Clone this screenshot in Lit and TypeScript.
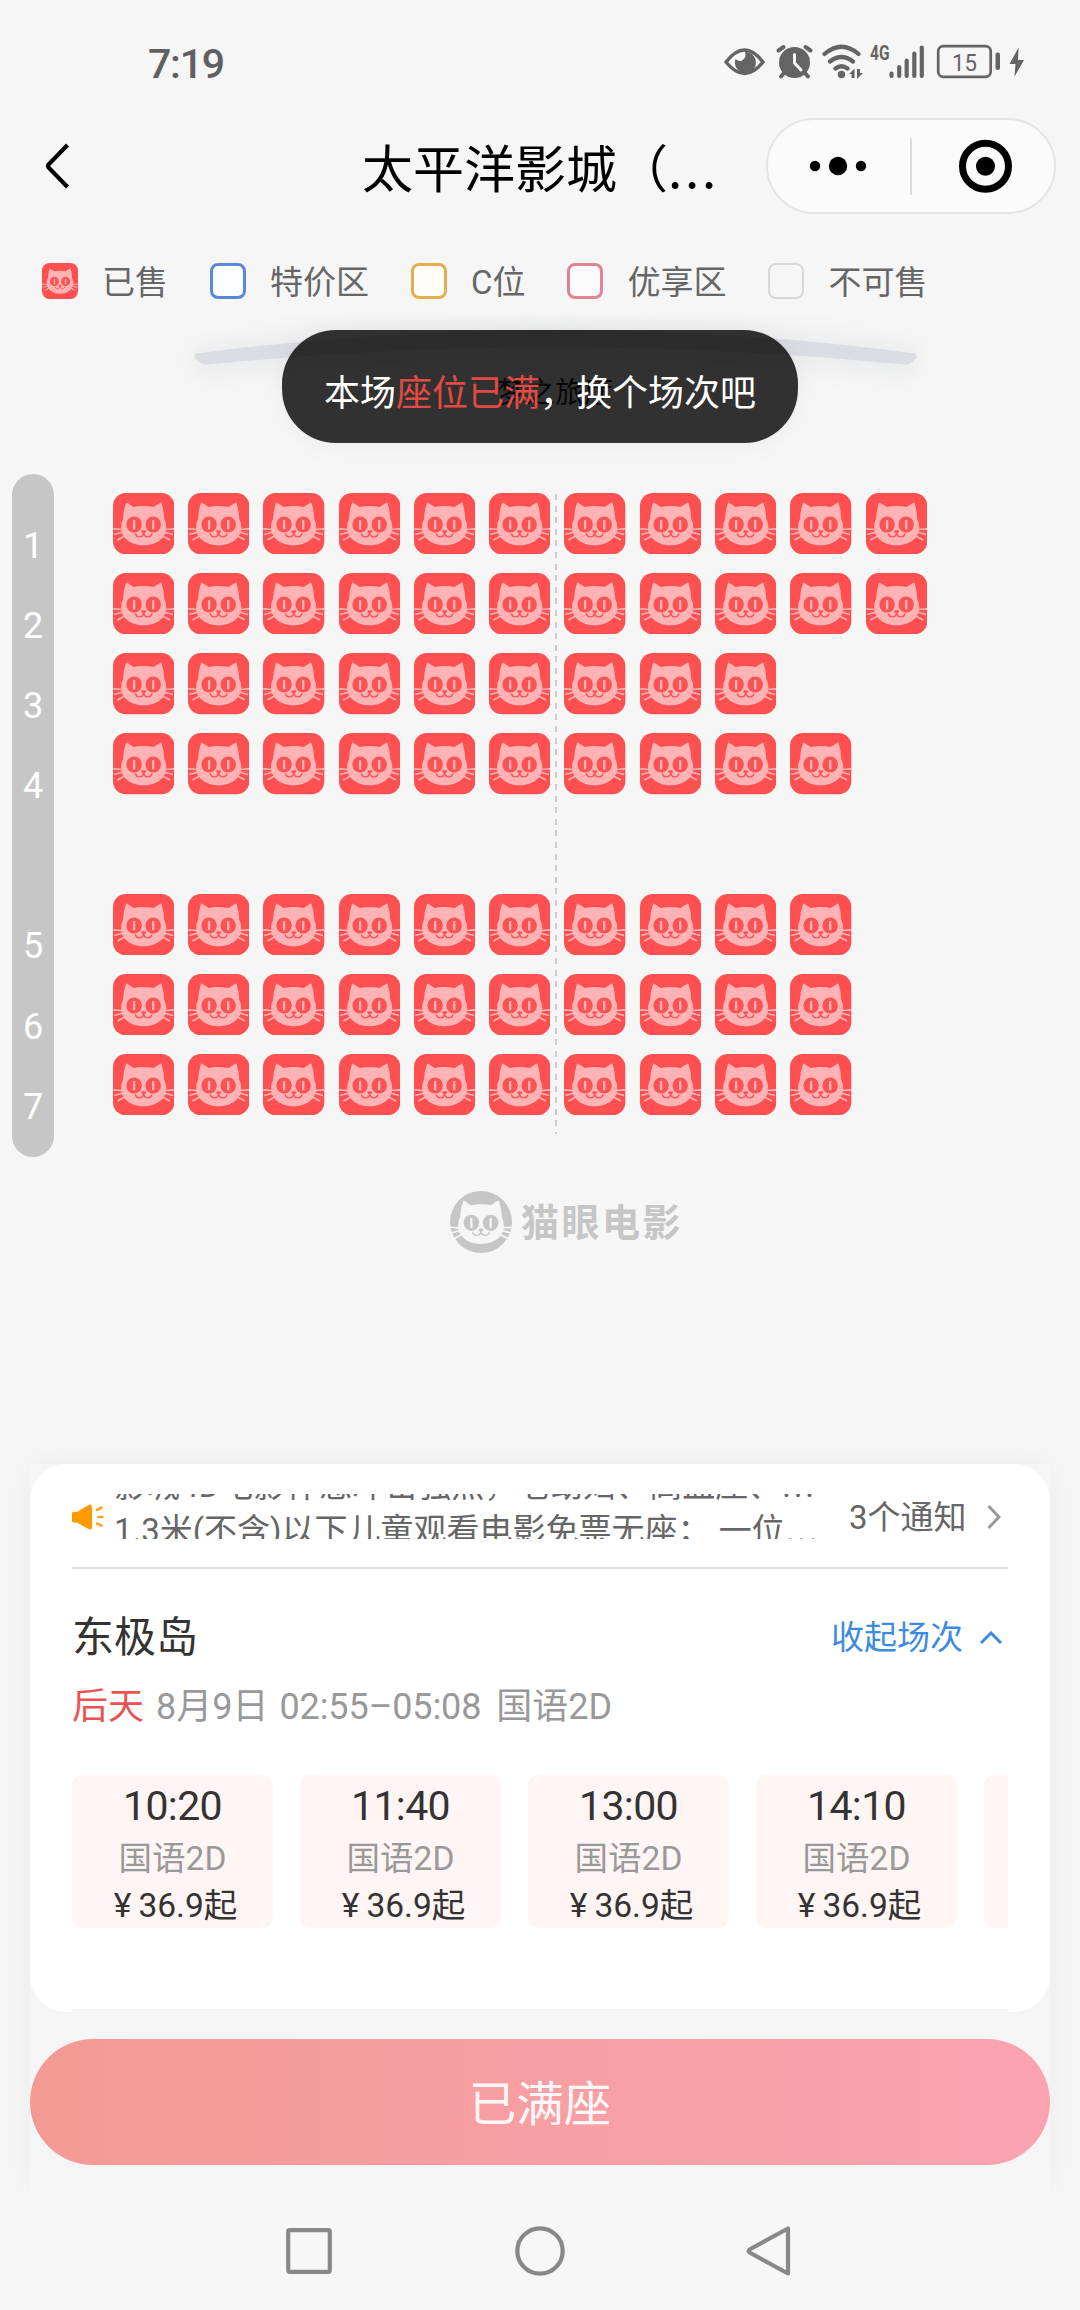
import { LitElement, html, css, svg } from "lit";
import { customElement, property } from "lit/decorators.js";

const catFace = (face: string, ink: string) => svg`
  <path fill=${face} d="M39 29 Q40 28 42 29 L62 42 Q91 36 121 42 L141 29 Q144 28 145 30 Q152 52 153 77 Q159 88 159 103 C159 134 130 156 91.500 156 C53 156 24 134 24 103 Q24 88 30 77 Q31 52 39 29 Z" />
  <ellipse fill=${ink} cx="63" cy="94" rx="23" ry="24" />
  <ellipse fill=${ink} cx="120" cy="94" rx="23" ry="24" />
  <rect fill=${face} x="59.500" y="80" width="7" height="29" rx="3.500" />
  <rect fill=${face} x="116.500" y="80" width="7" height="29" rx="3.500" />
  <path fill=${ink} d="M84 115 Q84 111 91.500 111 Q99 111 99 115 Q99 118 91.500 122 Q84 118 84 115 Z" />
  <path fill="none" stroke=${ink} stroke-width="4" stroke-linecap="round" d="M91.500 120 Q90 131 79 131 Q69 131 67 122 M91.500 120 Q93 131 104 131 Q114 131 116 122" />
`;

const whiskers = (color: string) => svg`
  <path fill="none" stroke=${color} stroke-width="5" d="M1 107 L26 109 M4 124 L28 117 M13 140 L34 129 M182 107 L157 109 M179 124 L155 117 M170 140 L149 129" />
`;

@customElement("cat-seat")
export class CatSeat extends LitElement {
  static styles = css`
    :host {
      display: block;
    }
    .icon {
      display: block;
      width: 100%;
      height: 100%;
    }
  `;

  render() {
    return html`<svg class="icon" viewBox="0 0 183 183">
      <rect width="183" height="183" rx="38" fill="#ff5051" />
      ${catFace("#ffb3b5", "#fb5354")} ${whiskers("#ffb3b5")}
    </svg>`;
  }
}

@customElement("session-card")
export class SessionCard extends LitElement {
  @property() time = "";
  @property() kind = "";
  @property() price = "";

  static styles = css`
    :host {
      display: flex;
      flex-direction: column;
      align-items: center;
      flex: none;
      width: 201px;
      height: 153px;
      border-radius: 10px;
      background: #fff5f4;
      color: #333;
      white-space: nowrap;
    }
    .time {
      margin-top: 6px;
      font-size: 41px;
      line-height: 50px;
      letter-spacing: -0.6px;
    }
    .kind {
      margin-top: 8px;
      font-size: 33.500px;
      line-height: 40px;
      color: #999;
    }
    .price {
      margin-top: 6px;
      font-size: 33.500px;
      line-height: 42px;
    }
    .yen {
      margin: 0 7px 0 6px;
    }
  `;

  render() {
    if (!this.time) return html``;
    return html`
      <div class="time">${this.time}</div>
      <div class="kind">${this.kind}</div>
      <div class="price"><span class="yen">¥</span>${this.price}起</div>
    `;
  }
}

const ROWS = [
  { label: "1", seats: 11 },
  { label: "2", seats: 11 },
  { label: "3", seats: 9 },
  { label: "4", seats: 10 },
  { label: "", seats: 0 },
  { label: "5", seats: 10 },
  { label: "6", seats: 10 },
  { label: "7", seats: 10 },
];

const SESSIONS = ["10:20", "11:40", "13:00", "14:10", ""];

@customElement("app-root")
export class AppRoot extends LitElement {
  static styles = css`
    :host {
      display: block;
      font-family: Roboto, "Noto Sans CJK SC", sans-serif;
    }
    .page {
      position: relative;
      display: flex;
      flex-direction: column;
      width: 1080px;
      height: 2310px;
      overflow: hidden;
      background: #f6f6f6;
    }
    svg {
      display: block;
      flex: none;
    }

    .status {
      display: flex;
      justify-content: space-between;
      box-sizing: border-box;
      height: 118px;
      padding: 40px 54px 0 148px;
      color: #606060;
    }
    .clock {
      font-size: 41px;
      line-height: 48px;
      font-weight: 500;
      letter-spacing: -1.200px;
    }

    .header {
      display: flex;
      align-items: center;
      box-sizing: border-box;
      height: 96px;
      padding: 0 24px 0 45px;
    }
    .title {
      width: 358px;
      margin-left: 291px;
      font-family: "Noto Sans CJK SC", sans-serif;
      font-size: 51px;
      line-height: 70px;
      color: #000;
      white-space: nowrap;
    }
    .title-dots {
      letter-spacing: 2.800px;
    }
    .capsule {
      display: flex;
      align-items: center;
      box-sizing: border-box;
      width: 290px;
      height: 96px;
      margin-left: auto;
      border: 2px solid #e4e4e4;
      border-radius: 48px;
      background: #fbfbfb;
    }

    .legend {
      display: flex;
      gap: 42px;
      height: 36px;
      padding: 49px 0 0 42px;
    }
    .legend-item {
      display: flex;
      align-items: center;
      gap: 24px;
      height: 36px;
      font-size: 33px;
      line-height: 36px;
      color: #666;
      white-space: nowrap;
    }
    .legend-text {
      padding-top: 3px;
    }
    .swatch {
      box-sizing: border-box;
      width: 36px;
      height: 36px;
      border: 2px solid #d8d8d8;
      border-radius: 8px;
    }
    .swatch.blue {
      border: 3px solid #5a88da;
      background: #fbfeff;
    }
    .swatch.orange {
      border: 3px solid #e8ac50;
      background: #fffefa;
    }
    .swatch.pink {
      border: 3px solid #e08496;
      background: #fffbfd;
    }
    .swatch.sold {
      border: 0;
    }

    .screen {
      display: flex;
      flex-direction: column;
      align-items: center;
      height: 175px;
      padding-left: 30px;
    }
    .hall-name {
      margin-top: -29px;
      font-size: 29px;
      line-height: 40px;
      color: #222;
    }

    .toast {
      position: absolute;
      left: 282px;
      top: 330px;
      display: flex;
      align-items: center;
      justify-content: center;
      width: 516px;
      height: 113px;
      border-radius: 54px;
      background: rgba(0, 0, 0, 0.8);
      box-shadow: 0 0 30px rgba(0, 0, 0, 0.05);
      font-family: "Noto Sans CJK SC", sans-serif;
      font-size: 36px;
      line-height: 50px;
      color: #fff;
      white-space: nowrap;
    }
    .toast-text {
      padding-top: 6px;
    }
    .full {
      color: #e34a44;
    }

    .hall {
      display: flex;
      align-items: flex-start;
      height: 683px;
      padding-left: 12px;
    }
    .rail {
      display: flex;
      flex-direction: column;
      box-sizing: border-box;
      width: 42px;
      height: 683px;
      padding-top: 32px;
      border-radius: 21px;
      background: #c6c6c6;
      color: #fff;
      font-size: 36px;
      text-align: center;
    }
    .rail-label {
      height: 80.100px;
      line-height: 81px;
    }
    .seats {
      position: relative;
      display: flex;
      flex-direction: column;
      gap: 18.850px;
      margin: 19px 0 0 58.700px;
    }
    .seat-row {
      display: flex;
      gap: 14px;
      height: 61.300px;
    }
    .seat {
      width: 61.300px;
      height: 61.300px;
    }
    .aisle {
      position: absolute;
      left: 442.300px;
      top: 1px;
      width: 2px;
      height: 640px;
      background: repeating-linear-gradient(#cdcdcd 0 6px, transparent 6px 11.600px);
    }

    .watermark {
      display: flex;
      align-items: center;
      gap: 9px;
      height: 62px;
      margin: 34px 0 0 450px;
      font-family: "Noto Sans CJK SC", sans-serif;
      font-size: 38px;
      font-weight: 700;
      letter-spacing: 2.500px;
      line-height: 56px;
      color: #c6c6c6;
    }
    .brand {
      height: 60px;
    }

    .sheet {
      height: 728px;
      margin: auto 30px 0;
      background: #f5f5f5;
      box-shadow: 0 0 30px rgba(0, 0, 0, 0.05);
    }
    .card {
      box-sizing: border-box;
      height: 548px;
      padding: 30px 42px 0;
      border-radius: 36px;
      background: #fff;
    }
    .notice {
      display: flex;
      align-items: center;
      height: 45px;
      color: #666;
      font-size: 33px;
    }
    .ticker {
      width: 704px;
      height: 45px;
      margin-left: 10px;
      overflow: hidden;
    }
    .ticker-line {
      height: 45px;
      line-height: 45px;
      white-space: nowrap;
    }
    .ticker-line:first-child {
      margin-top: -31px;
    }
    .ticker-dots {
      margin-left: 1px;
      letter-spacing: 2.800px;
    }
    .count {
      margin: 0 20px 0 31px;
      padding-top: 2px;
      line-height: 45px;
      white-space: nowrap;
    }
    .rule {
      height: 2px;
      margin-top: 28px;
      background: #e0e0e0;
    }
    .movie {
      display: flex;
      align-items: center;
      justify-content: space-between;
      height: 60px;
      margin-top: 39px;
    }
    .movie-name {
      font-size: 42px;
      line-height: 60px;
      color: #333;
    }
    .fold {
      display: flex;
      align-items: center;
      gap: 17px;
      padding-right: 6px;
      font-size: 33px;
      line-height: 46px;
      color: #3d8be0;
    }
    .when {
      display: flex;
      height: 52px;
      margin-top: 13px;
      font-size: 36px;
      line-height: 52px;
      color: #999;
      white-space: nowrap;
    }
    .day {
      margin-right: 12px;
      color: #ea5352;
    }
    .clock-range {
      margin: 0 15px 0 11px;
      letter-spacing: -0.100px;
    }
    .sessions {
      display: flex;
      gap: 27px;
      height: 153px;
      margin-top: 42px;
      overflow: hidden;
    }
    .gap {
      height: 30px;
      margin: -3px 42px 0;
      background: #f5f5f5;
    }
    .button {
      height: 126px;
      border-radius: 63px;
      background: linear-gradient(90deg, #f49a95, #fba3b1);
      color: #fff6f7;
      font-size: 47.500px;
      line-height: 133px;
      text-align: center;
    }
    .nav {
      display: flex;
      align-items: center;
      height: 118px;
      background: #f7f7f7;
    }
  `;

  private legend(kind: string, text: string) {
    return html`<div class="legend-item">
      ${kind === "sold"
        ? html`<cat-seat class="swatch sold"></cat-seat>`
        : html`<div class="swatch ${kind}"></div>`}
      <span class="legend-text">${text}</span>
    </div>`;
  }

  private statusIcons() {
    return html`<svg width="306" height="44" viewBox="720 40 306 44" fill="none">
      <path d="M726 62 Q744.500 38 763 62 Q744.500 85 726 62 Z" stroke="#646464" stroke-width="3.500" stroke-linejoin="round" />
      <path fill="#646464" d="M745 52 A10.500 10.500 0 1 1 735.500 59 Q739 62 742 60.500 Q747 57 745 52 Z" />
      <circle cx="794.500" cy="62.500" r="15.500" fill="#646464" />
      <path d="M778.500 50.500 L783.500 47 M810.500 50.500 L805.500 47 M784 73 L781 76.500 M805 73 L808 76.500" stroke="#646464" stroke-width="4" stroke-linecap="round" />
      <path d="M794.500 54.500 V63 L801 70" stroke="#f6f6f6" stroke-width="3" stroke-linecap="round" stroke-linejoin="round" />
      <path d="M824.500 54 Q841.500 39.500 858.500 54 M830 61.500 Q841.500 52.500 853 61.500 M835.500 68.500 Q841.500 64 847.500 68.500" stroke="#646464" stroke-width="4.200" stroke-linecap="round" />
      <circle cx="841.500" cy="74.500" r="3.700" fill="#646464" />
      <path fill="#646464" d="M849 74 L854.500 68.500 V78 H851.500 V74 Z M857 69 H860 V73 H863 L857 79 Z" />
      <text x="870" y="60" fill="#646464" font-family="Roboto" font-size="20.500" font-weight="700" textLength="19.500" lengthAdjust="spacingAndGlyphs">4G</text>
      <path d="M891.500 73.500 V76 M899.200 67 V76 M906.700 60.500 V76 M914.300 53.500 V76 M921.800 47.500 V76" stroke="#646464" stroke-width="4.200" stroke-linecap="round" />
      <rect x="938.200" y="46.200" width="52.500" height="30.600" rx="5" stroke="#646464" stroke-width="2.700" />
      <rect x="995.500" y="52.500" width="4.500" height="17.500" rx="2" fill="#646464" />
      <text x="964.500" y="70.500" text-anchor="middle" fill="#646464" font-family="Roboto" font-size="24.500" textLength="25" lengthAdjust="spacingAndGlyphs">15</text>
      <path fill="#646464" d="M1018.500 47.500 L1009.500 64 H1015.500 L1014.500 76.500 L1024 60 H1018 Z" />
    </svg>`;
  }

  render() {
    return html`<div class="page">
      <div class="status">
        <div class="clock">7:19</div>
        ${this.statusIcons()}
      </div>

      <div class="header">
        <svg width="26" height="50" viewBox="0 0 26 50" fill="none">
          <path d="M22.500 4 L3.500 23.500 Q2.500 25 3.500 26.500 L22.500 46" stroke="#000" stroke-width="4.200" />
        </svg>
        <div class="title">太平洋影城（<span class="title-dots">...</span></div>
        <div class="capsule">
          <svg width="286" height="92" viewBox="768 120 286 92">
            <circle cx="815" cy="166" r="5.200" />
            <circle cx="838" cy="166" r="9.200" />
            <circle cx="861" cy="166" r="5.200" />
            <rect x="910" y="138" width="2" height="57" fill="#dcdcdc" />
            <circle cx="985.500" cy="166.300" r="23" fill="none" stroke="#000" stroke-width="7" />
            <circle cx="985.500" cy="166.300" r="9.500" />
          </svg>
        </div>
      </div>

      <div class="legend">
        ${this.legend("sold", "已售")} ${this.legend("blue", "特价区")}
        ${this.legend("orange", "C位")} ${this.legend("pink", "优享区")}
        ${this.legend("gray", "不可售")}
      </div>

      <div class="screen">
        <svg width="780" height="103" viewBox="165 299 780 103" fill="none">
          <defs>
            <filter id="soft" x="-10%" y="-100%" width="120%" height="400%">
              <feGaussianBlur stdDeviation="13" />
            </filter>
          </defs>
          <path d="M194 362 Q555 316 917 362" stroke="#dcdde2" stroke-opacity="0.5" stroke-width="30" filter="url(#soft)" />
          <path fill="#dbdce2" d="M196 353.500 Q555 306 915 353.500 Q919 357 914 360 Q909 365.500 904 364.500 Q555 330 207 364.500 Q201 365 197 360 Q192 356 196 353.500 Z" />
        </svg>
        <div class="hall-name">梦之旅厅</div>
      </div>

      <div class="hall">
        <div class="rail">
          ${ROWS.map((r) => html`<div class="rail-label">${r.label}</div>`)}
        </div>
        <div class="seats">
          ${ROWS.map(
            (r) => html`<div class="seat-row">
              ${Array.from({ length: r.seats }, () => html`<cat-seat class="seat"></cat-seat>`)}
            </div>`
          )}
          <div class="aisle"></div>
        </div>
      </div>

      <div class="watermark">
        <svg width="62" height="62" viewBox="0 0 183 183">
          <circle cx="91.500" cy="91.500" r="91.500" fill="#c6c6c6" />
          ${catFace("#f6f6f6", "#c6c6c6")} ${whiskers("#f6f6f6")}
        </svg>
        <div class="brand">猫眼电影</div>
      </div>

      <div class="sheet">
        <div class="card">
          <div class="notice">
            <svg width="32" height="28" viewBox="0 0 32 28">
              <path fill="#ff9900" d="M0 10 Q0 9 1.500 9 H5 L16.500 2 Q20 0.500 20 4 V24 Q20 27.500 16.500 26 L5 19.500 H1.500 Q0 19.500 0 18 Z" />
              <path fill="none" stroke="#ffa526" stroke-width="2.600" stroke-linecap="round" d="M25 7 L29.500 4.500 M26.500 14 H30.500 M25 20.500 L29.500 22.500" />
            </svg>
            <div class="ticker">
              <div class="ticker-line">影城4D电影伴急冲击强烈，老幼妇、高血压、<span class="ticker-dots">...</span></div>
              <div class="ticker-line">1.3米(不含)以下儿童观看电影免票无座； 一位<span class="ticker-dots">...</span></div>
            </div>
            <div class="count">3个通知</div>
            <svg width="14" height="26" viewBox="0 0 14 26">
              <path fill="none" stroke="#999" stroke-width="3" d="M1.500 2 L12 13 L1.500 24" />
            </svg>
          </div>
          <div class="rule"></div>
          <div class="movie">
            <div class="movie-name">东极岛</div>
            <div class="fold">
              <span>收起场次</span>
              <svg width="22" height="14" viewBox="0 0 22 14">
                <path fill="none" stroke="#3d8be0" stroke-width="3" d="M1 12 L11 2 L21 12" />
              </svg>
            </div>
          </div>
          <div class="when">
            <span class="day">后天</span>
            <span>8月9日</span>
            <span class="clock-range">02:55–05:08</span>
            <span>国语2D</span>
          </div>
          <div class="sessions">
            ${SESSIONS.map(
              (t) => html`<session-card .time=${t} .kind=${"国语2D"} .price=${"36.9"}></session-card>`
            )}
          </div>
        </div>
        <div class="gap"></div>
        <div class="button">已满座</div>
      </div>

      <div class="nav">
        <svg width="1080" height="118" viewBox="0 2192 1080 118" fill="none" stroke="#888" stroke-width="4.200" stroke-linejoin="round">
          <rect x="288.200" y="2230.200" width="41.600" height="41.600" rx="1.500" />
          <circle cx="540" cy="2251" r="22.700" />
          <path d="M788 2228.500 V2273.500 L749.500 2252.500 Q748 2251 749.500 2249.500 Z" />
        </svg>
      </div>

      <div class="toast">
        <div class="toast-text">本场<span class="full">座位已满</span>，换个场次吧</div>
      </div>
    </div>`;
  }
}
